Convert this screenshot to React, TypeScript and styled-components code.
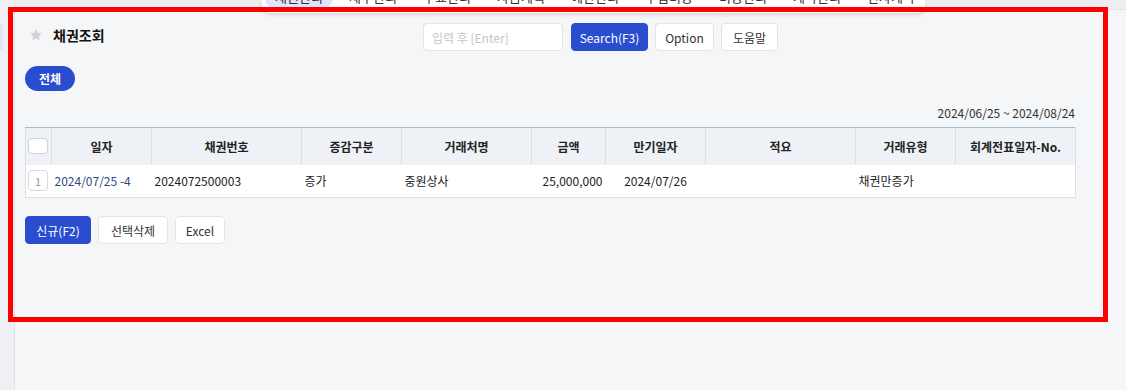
import React from "react";
import styled, { createGlobalStyle } from "styled-components";

const GlobalStyle = createGlobalStyle`
  html, body { margin: 0; padding: 0; }
  body {
    background: #f5f6f8;
    font-family: "Noto Sans CJK KR", "Noto Sans", sans-serif;
    color: #222;
    width: 1126px;
    height: 390px;
    overflow: hidden;
  }
  * { box-sizing: border-box; }
`;

const Shell = styled.div`
  position: relative;
  display: flex;
  width: 1126px;
  height: 390px;
`;

const SideRail = styled.aside`
  flex: 0 0 15px;
  background: #eff0f3;
  border-right: 1px solid #e1e3e7;
  padding-top: 24px;
`;

const RailTab = styled.div`
  width: 3px;
  height: 26px;
  background: #dfe5f7;
  border-radius: 0 4px 4px 0;
`;

const Main = styled.main`
  flex: 1;
  display: flex;
  flex-direction: column;
`;

const TopStrip = styled.div`
  height: 10px;
  background: #eceef1;
  border-bottom: 1px solid #e3e5e9;
`;

const NavMenu = styled.nav`
  position: absolute;
  left: 262px;
  top: 0;
  width: 663px;
  height: 13px;
  background: #fff;
  border-radius: 0 0 8px 8px;
  box-shadow: 0 2px 4px rgba(0, 0, 0, 0.12);
  overflow: hidden;
  display: flex;
  align-items: flex-end;
  padding: 0 0 6px 3px;
  gap: 6px;
  z-index: 2;
`;

const NavItem = styled.span<{ $active?: boolean }>`
  flex: 0 0 68px;
  height: 20px;
  line-height: 20px;
  font-size: 13px;
  text-align: center;
  color: #333;
  border-radius: 8px;
  background: ${(p) => (p.$active ? "#dfe4f8" : "transparent")};
`;

const Content = styled.section`
  padding: 13px 51px 0 10px;
  display: flex;
  flex-direction: column;
`;

const HeaderRow = styled.div`
  display: grid;
  grid-template-columns: 398px auto;
  align-items: center;
  height: 28px;
`;

const TitleBox = styled.div`
  display: flex;
  align-items: center;
  gap: 10px;
  padding: 0 0 4px 4px;
`;

const Title = styled.h1`
  margin: 0;
  font-size: 14px;
  font-weight: 700;
  color: #111;
`;

const SearchGroup = styled.div`
  display: flex;
  align-items: center;
  gap: 7px;
`;

const SearchInput = styled.input`
  width: 140px;
  height: 28px;
  margin-right: 1px;
  border: 1px solid #e2e4e8;
  border-radius: 4px;
  background: #fff;
  padding: 0 8px;
  font-family: inherit;
  font-size: 12px;
  color: #333;
  &::placeholder { color: #c3c5c9; }
  outline: none;
`;

const Button = styled.button<{ $primary?: boolean; $w: number }>`
  width: ${(p) => p.$w}px;
  height: 28px;
  border-radius: 4px;
  font-family: inherit;
  font-size: 12px;
  padding: 0;
  cursor: pointer;
  border: 1px solid ${(p) => (p.$primary ? "#2a4dd0" : "#e2e4e8")};
  background: ${(p) => (p.$primary ? "#2a4dd0" : "#fff")};
  color: ${(p) => (p.$primary ? "#fff" : "#333")};
`;

const PillRow = styled.div`
  margin-top: 15px;
  display: flex;
`;

const Pill = styled.button`
  width: 50px;
  height: 25px;
  border: none;
  border-radius: 13px;
  background: #2a4dd0;
  color: #fff;
  font-family: inherit;
  font-size: 12px;
  font-weight: 700;
  padding: 0;
`;

const DateRange = styled.div`
  margin-top: 13px;
  height: 18px;
  line-height: 18px;
  text-align: right;
  font-size: 12px;
  color: #333;
  padding-right: 1px;
`;

const Grid = styled.table`
  margin-top: 5px;
  width: 1050px;
  border-collapse: collapse;
  table-layout: fixed;
  font-size: 12px;
  background: #fff;
`;

const HeadCell = styled.th`
  height: 37px;
  background: #eef2f6;
  border-top: 1px solid #a9bccd;
  border-left: 1px solid #d8dfe6;
  font-weight: 700;
  color: #222;
  text-align: center;
  padding: 0;
  &:last-child { border-right: 1px solid #d8dfe6; }
`;

const BodyCell = styled.td<{ $align?: string; $link?: boolean }>`
  height: 33px;
  padding: 0 3px;
  text-align: ${(p) => p.$align || "left"};
  color: ${(p) => (p.$link ? "#2f4a80" : "#222")};
  border-bottom: 1px solid #dcdfe3;
  white-space: nowrap;
  &:first-child { border-left: 1px solid #dcdfe3; padding: 0 0 0 2px; }
  &:last-child { border-right: 1px solid #dcdfe3; }
`;

const CheckBox = styled.span`
  display: block;
  width: 20px;
  height: 16px;
  margin-left: 2px;
  background: #fff;
  border: 1px solid #cfd3d8;
  border-radius: 4px;
`;

const RowNum = styled.span`
  display: flex;
  align-items: center;
  justify-content: center;
  width: 20px;
  height: 21px;
  border: 1px solid #d7dadf;
  border-radius: 4px;
  color: #999;
  font-size: 11px;
`;

const ActionRow = styled.div`
  margin-top: 18px;
  display: flex;
  gap: 7px;
`;

const Annotation = styled.div`
  position: absolute;
  left: 8px;
  top: 7px;
  width: 1100px;
  height: 315px;
  border: 5px solid #f00;
  pointer-events: none;
  z-index: 3;
`;

const Star = () => (
  <svg width="14" height="14" viewBox="0 0 24 24">
    <path
      d="M12 2l3.09 6.26L22 9.27l-5 4.87 1.18 6.88L12 17.77l-6.18 3.25L7 14.14 2 9.27l6.91-1.01L12 2z"
      fill="#cfd1d5"
    />
  </svg>
);

const navItems = ["채권관리", "세무관리", "수표관리", "자금계획", "예산관리", "수입비용", "비용관리", "계약관리", "전자계약"];

const cols = [26, 100, 150, 100, 130, 74, 100, 150, 100, 120];
const heads = ["", "일자", "채권번호", "증감구분", "거래처명", "금액", "만기일자", "적요", "거래유형", "회계전표일자-No."];

export default function App() {
  return (
    <>
      <GlobalStyle />
      <Shell>
        <SideRail>
          <RailTab />
        </SideRail>
        <Main>
          <TopStrip />
          <Content>
            <HeaderRow>
              <TitleBox>
                <Star />
                <Title>채권조회</Title>
              </TitleBox>
              <SearchGroup>
                <SearchInput placeholder="입력 후 [Enter]" />
                <Button $primary $w={77}>Search(F3)</Button>
                <Button $w={59}>Option</Button>
                <Button $w={57}>도움말</Button>
              </SearchGroup>
            </HeaderRow>
            <PillRow>
              <Pill>전체</Pill>
            </PillRow>
            <DateRange>2024/06/25 ~ 2024/08/24</DateRange>
            <Grid>
              <colgroup>
                {cols.map((w, i) => (
                  <col key={i} style={{ width: w }} />
                ))}
              </colgroup>
              <thead>
                <tr>
                  {heads.map((h, i) => (
                    <HeadCell key={i}>{i === 0 ? <CheckBox /> : h}</HeadCell>
                  ))}
                </tr>
              </thead>
              <tbody>
                <tr>
                  <BodyCell><RowNum>1</RowNum></BodyCell>
                  <BodyCell $link>2024/07/25 -4</BodyCell>
                  <BodyCell>2024072500003</BodyCell>
                  <BodyCell>증가</BodyCell>
                  <BodyCell>중원상사</BodyCell>
                  <BodyCell $align="right">25,000,000</BodyCell>
                  <BodyCell $align="center">2024/07/26</BodyCell>
                  <BodyCell></BodyCell>
                  <BodyCell>채권만증가</BodyCell>
                  <BodyCell></BodyCell>
                </tr>
              </tbody>
            </Grid>
            <ActionRow>
              <Button $primary $w={66}>신규(F2)</Button>
              <Button $w={70}>선택삭제</Button>
              <Button $w={50}>Excel</Button>
            </ActionRow>
          </Content>
        </Main>
        <NavMenu>
          {navItems.map((n, i) => (
            <NavItem key={n} $active={i === 0}>{n}</NavItem>
          ))}
        </NavMenu>
        <Annotation />
      </Shell>
    </>
  );
}
